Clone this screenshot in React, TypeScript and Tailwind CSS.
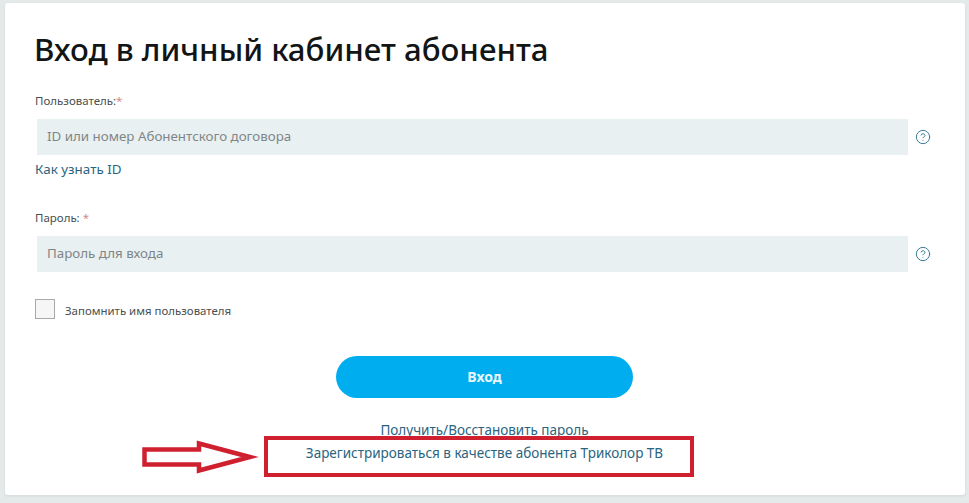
import { CircleHelp } from "lucide-react";

function Field({
  label,
  star,
  placeholder,
}: {
  label: string;
  star: string;
  placeholder: string;
}) {
  return (
    <div>
      <div className="text-[11.5px] leading-[16px] text-[#4a4f50]">
        {label}
        <span className="text-[#d08a8e]">{star}</span>
      </div>
      <div className="mt-[10px] flex items-center">
        <div className="ml-[2px] flex h-[36px] w-[871px] items-center bg-[#e9f0f1] pb-[1px] pl-[10px] text-[13.35px] text-[#7f8688]">
          {placeholder}
        </div>
        <CircleHelp
          className="ml-[7px] h-[16px] w-[16px] text-[#3a7d99]"
          strokeWidth={1.5}
        />
      </div>
    </div>
  );
}

export default function App() {
  return (
    <div
      className="relative h-[503px] w-[969px] overflow-hidden bg-[#e4e9ea] pl-[5px] pt-[3px]"
      style={{ fontFamily: '"Noto Sans", sans-serif' }}
    >
      <div className="h-[492px] w-[960px] rounded-[3px] bg-white pl-[30px] pt-[25px] shadow-[0_1px_3px_rgba(0,0,0,0.08)]">
        <h1 className="-ml-[1px] text-[31.2px] font-medium leading-[42px] text-[#111516]">
          Вход в личный кабинет абонента
        </h1>
        <div className="mt-[23px]">
          <Field
            label="Пользователь:"
            star="*"
            placeholder="ID или номер Абонентского договора"
          />
        </div>
        <a className="mt-[4px] block text-[13.4px] leading-[20px] text-[#2a6480]">
          Как узнать ID
        </a>
        <div className="mt-[31px]">
          <Field label="Пароль: " star="*" placeholder="Пароль для входа" />
        </div>
        <div className="mt-[27px] flex items-center">
          <div className="h-[20px] w-[20px] border border-[#a9a9a9] bg-[#f6f6f6]" />
          <span className="ml-[10px] pt-[3px] text-[11.45px] text-[#4a4f50]">
            Запомнить имя пользователя
          </span>
        </div>
        <div className="mt-[37px] flex w-[899px] justify-center">
          <button className="h-[42px] w-[297px] rounded-full bg-[#00aeef] pb-[2px] text-[14px] font-bold text-[#e8f7fd]">
            Вход
          </button>
        </div>
        <div className="mt-[22px] w-[899px] text-center text-[13.5px] leading-[20px] text-[#2a6480]">
          Получить/Восстановить пароль
        </div>
        <div className="mt-[3px] w-[899px] text-center text-[13.5px] leading-[20px] text-[#2a6480]">
          Зарегистрироваться в качестве абонента Триколор ТВ
        </div>
      </div>

      {/* красная рамка и стрелка поверх скриншота */}
      <div className="absolute left-[264px] top-[436px] h-[41px] w-[430px] border-[4.5px] border-[#cf2030]" />
      <svg
        className="absolute left-[140px] top-[438px]"
        width="120"
        height="38"
        viewBox="0 0 120 38"
      >
        <path
          d="M4.5 11.5 H59 V5.5 L110 19 L59 32.5 V26.5 H4.5 Z"
          fill="#fff"
          stroke="#cf2030"
          strokeWidth="4.5"
        />
      </svg>
    </div>
  );
}
